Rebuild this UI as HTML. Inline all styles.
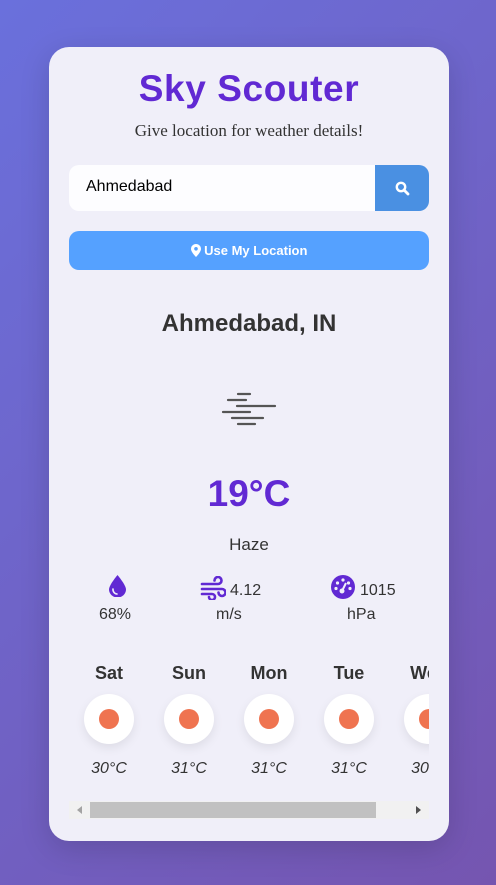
<!DOCTYPE html>
<html><head><style>
*{margin:0;padding:0;box-sizing:border-box}
body{width:496px;height:885px;background:linear-gradient(135deg,#6a70dc 0%,#7555b0 100%);font-family:"Liberation Sans",sans-serif;position:relative;overflow:hidden}
.card{position:absolute;left:49px;top:47px;width:400px;height:794px;background:#f0eff9;border-radius:20px;box-shadow:0 8px 30px rgba(0,0,0,.15)}
.a{position:absolute}
.c{text-align:center;left:0;width:400px}
.day{position:absolute;width:80px;text-align:center}
.circ{position:absolute;width:50px;height:50px;border-radius:50%;background:#fff;box-shadow:0 4px 10px rgba(0,0,0,.08)}
.circ i{position:absolute;left:15px;top:15px;width:20px;height:20px;border-radius:50%;background:#ef7350}
</style></head><body>
<div class="card">
 <div class="a c" style="top:21px;font-size:37px;font-weight:bold;color:#6129d3;letter-spacing:0.6px">Sky Scouter</div>
 <div class="a c" style="top:74px;font-family:'Liberation Serif',serif;font-size:17px;color:#333">Give location for weather details!</div>
 <div class="a" style="left:20px;top:118px;width:306px;height:46px;background:#fdfdff;border-radius:10px 0 0 10px"></div>
 <div class="a" style="left:37px;top:131px;font-size:16px;color:#000">Ahmedabad</div>
 <div class="a" style="left:326px;top:118px;width:54px;height:46px;background:#4a90e2;border-radius:0 10px 10px 0">
  <svg class="a" style="left:20px;top:16px" width="15" height="15" viewBox="0 0 15 15"><circle cx="6" cy="6" r="4.2" fill="none" stroke="#fff" stroke-width="2.4"/><path d="M9 9L13 13" stroke="#fff" stroke-width="2.8" stroke-linecap="round"/></svg>
 </div>
 <div class="a" style="left:20px;top:184px;width:360px;height:39px;background:#55a1ff;border-radius:10px;color:#fff;font-weight:bold;font-size:13px;text-align:center;line-height:39px">
  <svg width="10" height="13" viewBox="0 0 10 13" style="vertical-align:-2px"><path d="M5 0C2.2 0 0 2.2 0 5c0 3 5 8 5 8s5-5 5-8c0-2.8-2.2-5-5-5z" fill="#fff"/><circle cx="5" cy="4.8" r="1.8" fill="#55a1ff"/></svg> Use My Location</div>
 <div class="a c" style="top:263px;font-size:24px;font-weight:bold;color:#333">Ahmedabad, IN</div>
 <svg class="a" style="left:172px;top:345px" width="56" height="36" viewBox="0 0 56 36"><g stroke="#555" stroke-width="2.2" stroke-linecap="round"><path d="M17 2H29M7 8H25M16 14H54M2 20H29M11 26H42M17 32H34"/></g></svg>
 <div class="a c" style="top:426px;font-size:37px;color:#6129d3;font-weight:bold">19°C</div>
 <div class="a c" style="top:488px;font-size:17px;color:#333">Haze</div>
 <svg class="a" style="left:60px;top:528px" width="17" height="22" viewBox="0 0 17 22"><path d="M8.5 0C8.5 0 0 10 0 14.5A8.5 8 0 0 0 17 14.5C17 10 8.5 0 8.5 0z" fill="#6129d3"/><path d="M4 14a4.5 4.5 0 0 0 4 5" stroke="#f0eff9" stroke-width="1.6" fill="none" stroke-linecap="round"/></svg>
 <div class="a" style="left:50px;top:559px;font-size:16px;color:#333">68%</div>
 <svg class="a" style="left:151px;top:529px" width="26" height="24" viewBox="0 0 26 24"><g stroke="#6129d3" stroke-width="2.6" fill="none" stroke-linecap="round"><path d="M2 8H18a3.5 3.5 0 1 0-3.5-3.5"/><path d="M2 13H22a3.5 3.5 0 1 1-3.5 3.5"/><path d="M2 18H12a3 3 0 1 1-3 3"/></g></svg>
 <div class="a" style="left:181px;top:535px;font-size:16px;color:#333">4.12</div>
 <div class="a" style="left:167px;top:559px;font-size:16px;color:#333">m/s</div>
 <svg class="a" style="left:282px;top:528px" width="24" height="24" viewBox="0 0 24 24"><circle cx="12" cy="12" r="12" fill="#6129d3"/><g fill="#f0eff9"><circle cx="12" cy="5" r="1.6"/><circle cx="6.5" cy="8" r="1.6"/><circle cx="17.5" cy="8" r="1.6"/><circle cx="19" cy="13.5" r="1.6"/><circle cx="5" cy="13.5" r="1.6"/><circle cx="11" cy="16" r="2.5"/></g><path d="M11 16L15 8" stroke="#f0eff9" stroke-width="2"/></svg>
 <div class="a" style="left:311px;top:535px;font-size:16px;color:#333">1015</div>
 <div class="a" style="left:298px;top:559px;font-size:16px;color:#333">hPa</div>
 <div class="a" style="left:20px;top:600px;width:360px;height:150px;overflow:hidden">
  <div class="day" style="left:0;top:16px;font-size:18px;font-weight:bold;color:#333">Sat</div>
  <div class="day" style="left:80px;top:16px;font-size:18px;font-weight:bold;color:#333">Sun</div>
  <div class="day" style="left:160px;top:16px;font-size:18px;font-weight:bold;color:#333">Mon</div>
  <div class="day" style="left:240px;top:16px;font-size:18px;font-weight:bold;color:#333">Tue</div>
  <div class="day" style="left:320px;top:16px;font-size:18px;font-weight:bold;color:#333">Wed</div>
  <div class="circ" style="left:15px;top:47px"><i></i></div>
  <div class="circ" style="left:95px;top:47px"><i></i></div>
  <div class="circ" style="left:175px;top:47px"><i></i></div>
  <div class="circ" style="left:255px;top:47px"><i></i></div>
  <div class="circ" style="left:335px;top:47px"><i></i></div>
  <div class="day" style="left:0;top:113px;font-size:16px;font-style:italic;color:#333">30°C</div>
  <div class="day" style="left:80px;top:113px;font-size:16px;font-style:italic;color:#333">31°C</div>
  <div class="day" style="left:160px;top:113px;font-size:16px;font-style:italic;color:#333">31°C</div>
  <div class="day" style="left:240px;top:113px;font-size:16px;font-style:italic;color:#333">31°C</div>
  <div class="day" style="left:320px;top:113px;font-size:16px;font-style:italic;color:#333">30°C</div>
 </div>
 <div class="a" style="left:20px;top:754px;width:360px;height:18px;background:#f1f1f1">
  <div class="a" style="left:21px;top:1px;width:286px;height:16px;background:#c1c1c1"></div>
  <svg class="a" style="left:8px;top:5px" width="5" height="8"><path d="M5 0V8L0 4z" fill="#a3a3a3"/></svg>
  <svg class="a" style="left:347px;top:5px" width="5" height="8"><path d="M0 0V8L5 4z" fill="#505050"/></svg>
 </div>
</div>
</body></html>
